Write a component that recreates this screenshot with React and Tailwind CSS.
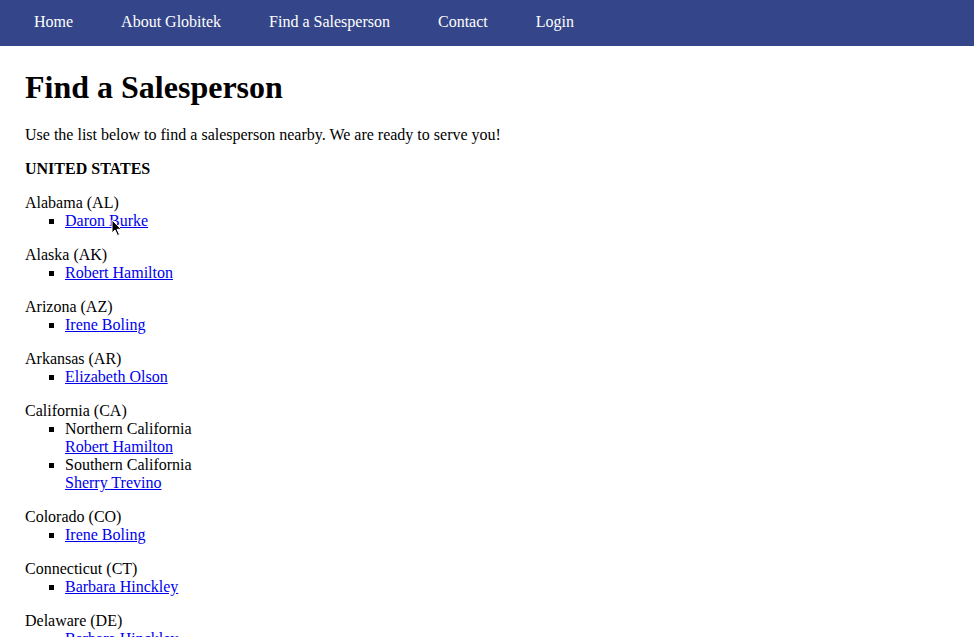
const NAV_LINKS = ['Home', 'About Globitek', 'Find a Salesperson', 'Contact', 'Login'];

const STATES = [
  { name: 'Alabama (AL)', people: [{ name: 'Daron Burke' }] },
  { name: 'Alaska (AK)', people: [{ name: 'Robert Hamilton' }] },
  { name: 'Arizona (AZ)', people: [{ name: 'Irene Boling' }] },
  { name: 'Arkansas (AR)', people: [{ name: 'Elizabeth Olson' }] },
  {
    name: 'California (CA)',
    people: [
      { region: 'Northern California', name: 'Robert Hamilton' },
      { region: 'Southern California', name: 'Sherry Trevino' },
    ],
  },
  { name: 'Colorado (CO)', people: [{ name: 'Irene Boling' }] },
  { name: 'Connecticut (CT)', people: [{ name: 'Barbara Hinckley' }] },
  { name: 'Delaware (DE)', people: [{ name: 'Barbara Hinckley' }] },
  { name: 'Florida (FL)', people: [{ name: 'Daron Burke' }] },
];

function Cursor() {
  return (
    <svg
      className="pointer-events-none absolute left-[111px] top-[219px]"
      width="12"
      height="18"
      viewBox="0 0 12 18"
    >
      <path
        d="M1 1 L1 14 L4 11 L6.5 16.5 L8.5 15.6 L6 10.3 L10.2 10.3 Z"
        fill="#000"
        stroke="#fff"
        strokeWidth="1"
        strokeLinejoin="round"
      />
    </svg>
  );
}

export default function App() {
  return (
    <div className="relative h-[637px] overflow-hidden bg-white text-black font-['Liberation_Serif',_'Times_New_Roman',_serif] text-[16px] leading-[18px]">
      <nav className="flex h-[46px] items-center gap-12 bg-[#344689] pb-[2px] pl-[34px] text-white">
        {NAV_LINKS.map((label) => (
          <a key={label} href="#" className="leading-[18px]">
            {label}
          </a>
        ))}
      </nav>

      <main className="px-[25px]">
        <h1 className="mt-[23px] mb-[20px] text-[32px] font-bold leading-[37px]">
          Find a Salesperson
        </h1>
        <p className="mb-4">
          Use the list below to find a salesperson nearby. We are ready to serve you!
        </p>
        <p className="mb-4 font-bold">UNITED STATES</p>

        {STATES.map((state) => (
          <div key={state.name} className="mb-4">
            <div>{state.name}</div>
            <ul className="list-[square] pl-10">
              {state.people.map((p, i) => (
                <li key={i}>
                  {p.region ? <div>{p.region}</div> : null}
                  <a href="#" className="text-[#0000ee] underline">
                    {p.name}
                  </a>
                </li>
              ))}
            </ul>
          </div>
        ))}
      </main>

      <Cursor />
    </div>
  );
}
